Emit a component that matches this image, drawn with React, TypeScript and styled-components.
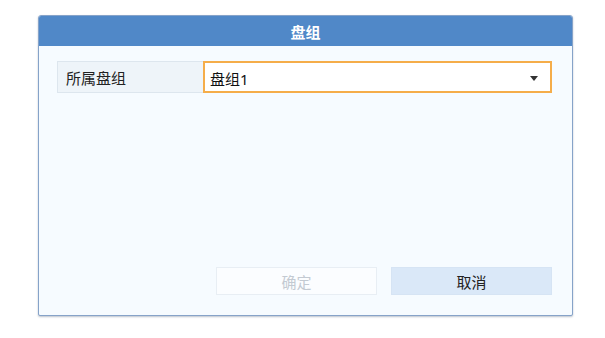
import React from 'react';
import styled, { createGlobalStyle } from 'styled-components';

const GlobalStyle = createGlobalStyle`
  html, body {
    margin: 0;
    padding: 0;
    background: #fff;
    font-family: "Noto Sans", "Noto Sans CJK SC", sans-serif;
  }
`;

const Page = styled.div`
  width: 605px;
  height: 338px;
  padding: 15px 0 0 38px;
  box-sizing: border-box;
`;

const Dialog = styled.div`
  width: 535px;
  height: 301px;
  box-sizing: border-box;
  display: flex;
  flex-direction: column;
  background: #f6fbff;
  border: 1px solid #86a3c9;
  border-radius: 3px 3px 2px 2px;
  box-shadow: 0 1px 2px rgba(60, 80, 110, 0.35);
  overflow: hidden;
`;

const Header = styled.div`
  height: 30px;
  flex: none;
  display: flex;
  align-items: center;
  justify-content: center;
  background: #5088c8;
  color: #fff;
  font-size: 15px;
  font-weight: 700;
`;

const Body = styled.div`
  flex: 1;
  display: flex;
  flex-direction: column;
  padding: 15px 20px 20px 18px;
`;

const Row = styled.div`
  display: flex;
  height: 32px;
`;

const Label = styled.div`
  width: 146px;
  box-sizing: border-box;
  display: flex;
  align-items: center;
  padding-left: 8px;
  background: #eef4f9;
  border: 1px solid #dde6ee;
  border-right: none;
  color: #222;
  font-size: 15px;
`;

const Select = styled.div`
  flex: 1;
  box-sizing: border-box;
  display: flex;
  align-items: center;
  justify-content: space-between;
  padding: 2px 12px 0 5px;
  background: #fff;
  border: 2px solid #f5ad4a;
  color: #111;
  font-size: 15px;
`;

const Caret = styled.span`
  width: 0;
  height: 0;
  border-left: 4px solid transparent;
  border-right: 4px solid transparent;
  border-top: 5px solid #333;
`;

const Footer = styled.div`
  margin-top: auto;
  display: flex;
  justify-content: flex-end;
  gap: 14px;
`;

const Button = styled.button<{ $primary?: boolean }>`
  width: 161px;
  height: 28px;
  box-sizing: border-box;
  font-family: inherit;
  font-size: 15px;
  border: 1px solid ${(p) => (p.$primary ? '#e8eef4' : '#d6e4f4')};
  background: ${(p) => (p.$primary ? '#fbfdff' : '#dae8f8')};
  color: ${(p) => (p.$primary ? '#c3cad2' : '#222')};
  padding: 0;
`;

export default function App() {
  return (
    <Page>
      <GlobalStyle />
      <Dialog>
        <Header>盘组</Header>
        <Body>
          <Row>
            <Label>所属盘组</Label>
            <Select>
              <span>盘组1</span>
              <Caret />
            </Select>
          </Row>
          <Footer>
            <Button $primary disabled>确定</Button>
            <Button>取消</Button>
          </Footer>
        </Body>
      </Dialog>
    </Page>
  );
}
